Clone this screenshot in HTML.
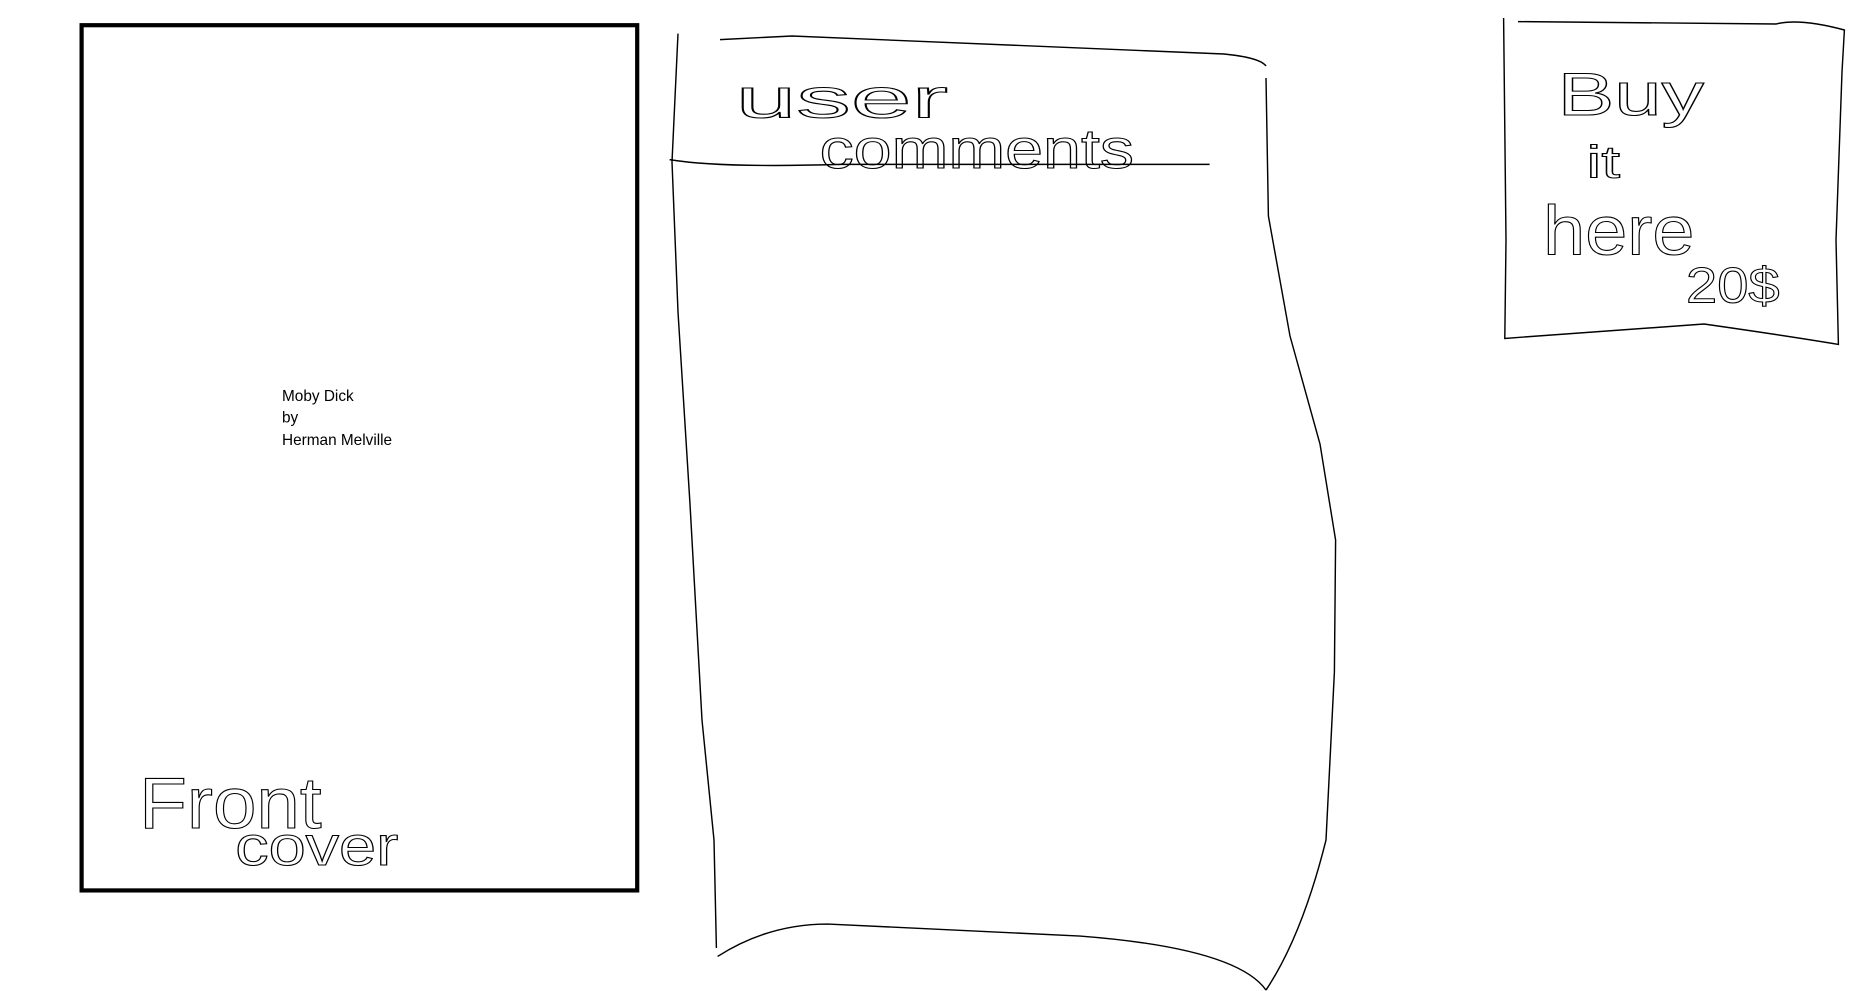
<!DOCTYPE html>
<html><head><meta charset="utf-8"><style>
html,body{margin:0;padding:0;background:#fff;width:1863px;height:991px;overflow:hidden}
svg{display:block}
</style></head><body>
<svg width="1863" height="991" viewBox="0 0 1552.5 825.8" preserveAspectRatio="none">
<rect x="68" y="21" width="463" height="721" fill="none" stroke="#000" stroke-width="3.5"/>
<text x="235" y="334" font-family="Liberation Sans, sans-serif" font-size="12.8" fill="#000">Moby Dick</text>
<text x="235" y="352" font-family="Liberation Sans, sans-serif" font-size="12.8" fill="#000">by</text>
<text x="235" y="371" font-family="Liberation Sans, sans-serif" font-size="12.8" fill="#000">Herman Melville</text>
<g fill="none" stroke="#000" stroke-width="1.2">
<path d="M565 28 L560 135 L565 260 L575 420 L585 600 L595 700 L597 790"/>
<path d="M600 33 L660 30 L1020 45 Q1050 48 1055 55"/>
<path d="M558 133 Q600 140 700 137 L940 137 L1008 137"/>
<path d="M1055 65 L1057 180 L1075 280 L1100 370 L1113 450 L1112 560 L1105 700 Q1085 780 1055 825"/>
<path d="M598 797 Q640 770 690 770 L900 780 Q1030 790 1055 825"/>
<path d="M1253 15 L1255 200 L1254 282 L1420 270 Q1490 280 1532 287 L1530 200 L1535 60 L1537 25 Q1500 15 1480 20 L1265 18"/>
</g>
<g font-family="Liberation Sans, sans-serif" fill="none" stroke="#000" stroke-width="0.9">
<text x="613" y="98" font-size="46" textLength="177" lengthAdjust="spacingAndGlyphs">user</text>
<text x="683" y="140" font-size="46" textLength="262" lengthAdjust="spacingAndGlyphs">comments</text>
<text x="1298" y="96" font-size="50" textLength="122" lengthAdjust="spacingAndGlyphs">Buy</text>
<text x="1322" y="148" font-size="38" textLength="28" lengthAdjust="spacingAndGlyphs">it</text>
<text x="1286" y="212" font-size="58" textLength="126" lengthAdjust="spacingAndGlyphs">here</text>
<text x="1405" y="252" font-size="42" textLength="78" lengthAdjust="spacingAndGlyphs">20$</text>
<text x="116" y="690" font-size="60" textLength="152" lengthAdjust="spacingAndGlyphs">Front</text>
<text x="196" y="721" font-size="46" textLength="136" lengthAdjust="spacingAndGlyphs">cover</text>
</g>
</svg>
</body></html>
